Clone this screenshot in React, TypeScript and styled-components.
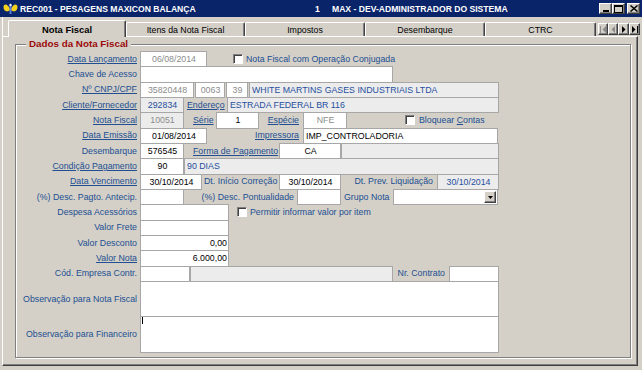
import React from "react";
import styled, { createGlobalStyle } from "styled-components";

const BLUE = "#214f91";
const RO_BLUE = "#1f4fa0";

const GlobalStyle = createGlobalStyle`
  html, body { margin: 0; padding: 0; background: #d4d0c8; }
  body { font-family: "Liberation Sans", Arial, sans-serif; font-size: 8.8px; color: #000; }
  *, *::before, *::after { box-sizing: border-box; }
`;

const Window = styled.div`
  width: 642px;
  height: 370px;
  overflow: hidden;
  background: #d4d0c8;
  display: flex;
  flex-direction: column;
`;

const TitleBar = styled.div`
  height: 17px;
  flex: none;
  background: #0a246a;
  color: #fff;
  display: flex;
  align-items: center;
  padding: 0 2px 0 3px;
  font-weight: bold;
  font-size: 8.6px;
  white-space: nowrap;
`;
const TitleIcon = styled.svg`
  flex: none;
  margin-right: 2px;
`;
const TitleMain = styled.span`
  width: 295px;
  flex: none;
`;
const TitleNum = styled.span`
  width: 17px;
  flex: none;
`;
const TitleUser = styled.span`
  flex: 1;
`;
const WinBtn = styled.div<{ $gap?: number }>`
  width: 13px;
  height: 11px;
  flex: none;
  margin-left: ${(p) => p.$gap ?? 0}px;
  background: #d4d0c8;
  border: 1px solid;
  border-color: #fff #404040 #404040 #fff;
  box-shadow: inset -1px -1px 0 #808080;
  display: flex;
  align-items: center;
  justify-content: center;
`;

const TabStrip = styled.div`
  height: 19px;
  flex: none;
  display: flex;
  align-items: flex-end;
  margin-left: 2px;
  border-left: 1px solid #fff;
  padding-left: 5px;
`;
const Tab = styled.div<{ $w: number; $active?: boolean }>`
  width: ${(p) => p.$w}px;
  height: ${(p) => (p.$active ? 17 : 14)}px;
  margin-bottom: ${(p) => (p.$active ? -1 : 0)}px;
  flex: none;
  position: relative;
  z-index: ${(p) => (p.$active ? 2 : 1)};
  background: #d4d0c8;
  border-top: 1px solid #fff;
  border-left: 1px solid #fff;
  border-right: 1px solid #404040;
  box-shadow: inset -1px 0 0 #808080;
  border-radius: 2px 2px 0 0;
  display: flex;
  align-items: center;
  justify-content: center;
  font-weight: ${(p) => (p.$active ? "bold" : "normal")};
  font-size: ${(p) => (p.$active ? "9.4px" : "8.8px")};
  white-space: nowrap;
`;
const NavGroup = styled.div`
  display: flex;
  margin-left: 2px;
  margin-bottom: 1px;
`;
const NavBtn = styled.div<{ $w: number }>`
  width: ${(p) => p.$w}px;
  height: 12px;
  flex: none;
  background: #d4d0c8;
  border: 1px solid;
  border-color: #fff #404040 #404040 #fff;
  box-shadow: inset -1px -1px 0 #808080;
  display: flex;
  align-items: center;
  justify-content: center;
`;

const Panel = styled.div`
  margin-left: 2px;
  width: 636px;
  height: 330px;
  flex: none;
  border: 1px solid;
  border-color: #fff #404040 #404040 #fff;
  box-shadow: inset -1px -1px 0 #808080;
  padding: 7px 0 0 12px;
`;

const GroupBox = styled.div`
  position: relative;
  width: 616px;
  height: 314px;
  border: 1px solid #808080;
  box-shadow: 1px 1px 0 #fff, inset 1px 1px 0 #fff;
  padding-top: 6px;
  display: flex;
  flex-direction: column;
`;
const GroupTitle = styled.div`
  position: absolute;
  top: -7px;
  left: 10px;
  padding: 0 3px;
  line-height: 12px;
  background: #d4d0c8;
  color: #9b0a0a;
  font-weight: bold;
  font-size: 9.8px;
  white-space: nowrap;
`;

const Row = styled.div<{ $h?: number }>`
  display: flex;
  flex: none;
  height: ${(p) => p.$h ?? 15.333}px;
  align-items: stretch;
`;
const RowLabel = styled.div<{ $link?: boolean }>`
  width: 121px;
  flex: none;
  margin-right: 3px;
  display: flex;
  align-items: center;
  justify-content: flex-end;
  color: ${BLUE};
  white-space: nowrap;
  text-decoration: ${(p) => (p.$link ? "underline" : "none")};
`;

type Tone = "edit" | "dis" | "ro" | "roDis";
const Field = styled.div<{
  $w: number;
  $ml?: number;
  $tone?: Tone;
  $align?: "left" | "center" | "right";
  $top?: boolean;
}>`
  position: relative;
  width: ${(p) => p.$w}px;
  flex: none;
  margin-left: ${(p) => p.$ml ?? 0}px;
  height: calc(100% + 1px);
  border: 1px solid #a7a7a7;
  background: ${(p) => (p.$tone === "ro" || p.$tone === "roDis" ? "#ececec" : "#fff")};
  color: ${(p) =>
    p.$tone === "dis" || p.$tone === "roDis" ? "#8c8c8c" : p.$tone === "ro" ? RO_BLUE : "#000"};
  display: flex;
  align-items: ${(p) => (p.$top ? "flex-start" : "center")};
  justify-content: ${(p) =>
    p.$align === "center" ? "center" : p.$align === "right" ? "flex-end" : "flex-start"};
  padding: 0 1px 0 2px;
  white-space: nowrap;
  overflow: hidden;
`;
const Cap = styled.div<{ $w: number; $align?: "left" | "right"; $pad?: number; $link?: boolean }>`
  width: ${(p) => p.$w}px;
  flex: none;
  display: flex;
  align-items: center;
  justify-content: ${(p) => (p.$align === "right" ? "flex-end" : "flex-start")};
  padding-left: ${(p) => (p.$align === "right" ? 0 : p.$pad ?? 0)}px;
  padding-right: ${(p) => (p.$align === "right" ? p.$pad ?? 0 : 0)}px;
  color: ${BLUE};
  white-space: nowrap;
  text-decoration: ${(p) => (p.$link ? "underline" : "none")};
`;
const Check = styled.div<{ $ml: number }>`
  width: 10px;
  height: 10px;
  flex: none;
  align-self: center;
  margin-left: ${(p) => p.$ml}px;
  background: #fff;
  border: 1px solid;
  border-color: #808080 #fff #fff #808080;
  box-shadow: inset 1px 1px 0 #404040;
`;
const CheckText = styled.div<{ $ml: number }>`
  flex: none;
  align-self: center;
  margin-left: ${(p) => p.$ml}px;
  color: ${BLUE};
  white-space: nowrap;
`;
const U = styled.span`
  text-decoration: underline;
`;
const DropBtn = styled.div`
  position: absolute;
  right: 1px;
  top: 1px;
  bottom: 1px;
  width: 12px;
  background: #d4d0c8;
  border: 1px solid;
  border-color: #fff #404040 #404040 #fff;
  box-shadow: inset -1px -1px 0 #808080;
  display: flex;
  align-items: center;
  justify-content: center;
`;
const Caret = styled.div`
  width: 1px;
  height: 7px;
  margin-top: 0px;
  margin-left: -1px;
  background: #000;
`;

const Arrow = ({ dir, bar, color }: { dir: "l" | "r"; bar?: boolean; color: string }) => (
  <svg width="7" height="7" viewBox="0 0 7 7">
    {dir === "l" ? (
      <>
        {bar && <rect x="0" y="0" width="1" height="7" fill={color} />}
        <path d={bar ? "M6 0 L6 7 L2.5 3.5 Z" : "M5 0 L5 7 L1.5 3.5 Z"} fill={color} />
      </>
    ) : (
      <>
        {bar && <rect x="6" y="0" width="1" height="7" fill={color} />}
        <path d={bar ? "M1 0 L1 7 L4.5 3.5 Z" : "M2 0 L2 7 L5.5 3.5 Z"} fill={color} />
      </>
    )}
  </svg>
);

export default function App() {
  return (
    <>
      <GlobalStyle />
      <Window>
        <TitleBar>
          <TitleIcon width="15" height="12" viewBox="0 0 15 12">
            <path d="M7 6 C5 0.5 0.5 0 0.5 4 C0.5 8 4 10 7 7 Z" fill="#f4d21c" />
            <path d="M8 6 C10 0.5 14.5 0 14.5 4 C14.5 8 11 10 8 7 Z" fill="#f4d21c" />
            <path d="M6.5 2 L8.5 2 L8.5 11 L6.5 11 Z" fill="#5a7ad8" />
            <circle cx="7.5" cy="2" r="1.2" fill="#fff" />
          </TitleIcon>
          <TitleMain>REC001 - PESAGENS MAXICON BALANÇA</TitleMain>
          <TitleNum>1</TitleNum>
          <TitleUser>MAX - DEV-ADMINISTRADOR DO SISTEMA</TitleUser>
          <WinBtn>
            <svg width="8" height="7" viewBox="0 0 8 7">
              <rect x="1" y="5" width="6" height="2" fill="#000" />
            </svg>
          </WinBtn>
          <WinBtn>
            <svg width="9" height="8" viewBox="0 0 9 8">
              <rect x="0.5" y="0.5" width="8" height="7" fill="none" stroke="#000" />
              <rect x="0" y="1" width="9" height="1" fill="#000" />
            </svg>
          </WinBtn>
          <WinBtn $gap={2}>
            <svg width="8" height="7" viewBox="0 0 8 7">
              <path d="M0.5 0.5 L7.5 6.5 M7.5 0.5 L0.5 6.5" stroke="#000" strokeWidth="1.5" />
            </svg>
          </WinBtn>
        </TitleBar>

        <TabStrip>
          <Tab $w={118} $active>Nota Fiscal</Tab>
          <Tab $w={119}>Itens da Nota Fiscal</Tab>
          <Tab $w={120}>Impostos</Tab>
          <Tab $w={120}>Desembarque</Tab>
          <Tab $w={111}>CTRC</Tab>
          <NavGroup>
            <NavBtn $w={10}>
              <Arrow dir="l" bar color="#8c8c8c" />
            </NavBtn>
            <NavBtn $w={10}>
              <Arrow dir="l" color="#8c8c8c" />
            </NavBtn>
            <NavBtn $w={11}>
              <Arrow dir="r" color="#000" />
            </NavBtn>
            <NavBtn $w={11}>
              <Arrow dir="r" bar color="#000" />
            </NavBtn>
          </NavGroup>
        </TabStrip>

        <Panel>
          <GroupBox>
            <GroupTitle>Dados da Nota Fiscal</GroupTitle>

            <Row>
              <RowLabel $link>Data Lançamento</RowLabel>
              <Field $w={67} $tone="dis" $align="center">06/08/2014</Field>
              <Check $ml={26} />
              <CheckText $ml={3}>Nota Fiscal com Operação Conjugada</CheckText>
            </Row>

            <Row>
              <RowLabel>Chave de Acesso</RowLabel>
              <Field $w={253} />
            </Row>

            <Row>
              <RowLabel $link>Nº CNPJ/CPF</RowLabel>
              <Field $w={54} $tone="dis" $align="center">35820448</Field>
              <Field $w={30} $ml={1} $tone="dis" $align="center">0063</Field>
              <Field $w={22} $ml={1} $tone="dis" $align="center">39</Field>
              <Field $w={250} $ml={1} $tone="ro">WHITE MARTINS GASES INDUSTRIAIS LTDA</Field>
            </Row>

            <Row>
              <RowLabel $link>Cliente/Fornecedor</RowLabel>
              <Field $w={44} $tone="ro" $align="center">292834</Field>
              <Cap $w={43} $pad={3} $link>Endereço</Cap>
              <Field $w={272} $tone="ro">ESTRADA FEDERAL BR 116</Field>
            </Row>

            <Row>
              <RowLabel $link>Nota Fiscal</RowLabel>
              <Field $w={44} $tone="roDis" $align="center">10051</Field>
              <Cap $w={32} $pad={9} $link>Série</Cap>
              <Field $w={43} $align="center">1</Field>
              <Cap $w={44} $align="right" $pad={4} $link>Espécie</Cap>
              <Field $w={44} $tone="dis" $align="center">NFE</Field>
              <Check $ml={58} />
              <CheckText $ml={4}>
                Bloquear <U>C</U>ontas
              </CheckText>
            </Row>

            <Row>
              <RowLabel $link>Data Emissão</RowLabel>
              <Field $w={67} $align="center">01/08/2014</Field>
              <Cap $w={96} $align="right" $pad={4} $link>Impressora</Cap>
              <Field $w={195}>IMP_CONTROLADORIA</Field>
            </Row>

            <Row>
              <RowLabel>Desembarque</RowLabel>
              <Field $w={44} $align="center">576545</Field>
              <Cap $w={95} $pad={9} $link>Forma de Pagamento</Cap>
              <Field $w={62} $align="center">CA</Field>
              <Field $w={158} $tone="ro" />
            </Row>

            <Row>
              <RowLabel $link>Condição Pagamento</RowLabel>
              <Field $w={44} $align="center">90</Field>
              <Field $w={315} $tone="ro">90 DIAS</Field>
            </Row>

            <Row>
              <RowLabel $link>Data Vencimento</RowLabel>
              <Field $w={62} $align="center">30/10/2014</Field>
              <Cap $w={77} $pad={2}>Dt. Início Correção</Cap>
              <Field $w={62} $align="center">30/10/2014</Field>
              <Cap $w={96} $align="right" $pad={4}>Dt. Prev. Liquidação</Cap>
              <Field $w={62} $tone="ro" $align="center">30/10/2014</Field>
            </Row>

            <Row>
              <RowLabel>(%) Desc. Pagto. Antecip.</RowLabel>
              <Field $w={44} />
              <Cap $w={113} $align="right" $pad={3}>(%) Desc. Pontualidade</Cap>
              <Field $w={44} />
              <Cap $w={52} $pad={3}>Grupo Nota</Cap>
              <Field $w={105}>
                <DropBtn>
                  <svg width="5" height="3" viewBox="0 0 5 3">
                    <path d="M0 0 L5 0 L2.5 3 Z" fill="#000" />
                  </svg>
                </DropBtn>
              </Field>
            </Row>

            <Row>
              <RowLabel>Despesa Acessórios</RowLabel>
              <Field $w={89} />
              <Check $ml={8} />
              <CheckText $ml={3}>Permitir informar valor por item</CheckText>
            </Row>

            <Row>
              <RowLabel>Valor Frete</RowLabel>
              <Field $w={89} />
            </Row>

            <Row>
              <RowLabel>Valor Desconto</RowLabel>
              <Field $w={89} $align="right">0,00</Field>
            </Row>

            <Row>
              <RowLabel $link>Valor Nota</RowLabel>
              <Field $w={89} $align="right">6.000,00</Field>
            </Row>

            <Row>
              <RowLabel>Cód. Empresa Contr.</RowLabel>
              <Field $w={50} />
              <Field $w={203} $tone="ro" />
              <Cap $w={56} $align="right" $pad={4}>Nr. Contrato</Cap>
              <Field $w={50} />
            </Row>

            <Row $h={35.5}>
              <RowLabel>Observação para Nota Fiscal</RowLabel>
              <Field $w={359} $top />
            </Row>

            <Row $h={35.5}>
              <RowLabel>Observação para Financeiro</RowLabel>
              <Field $w={359} $top>
                <Caret />
              </Field>
            </Row>
          </GroupBox>
        </Panel>
      </Window>
    </>
  );
}
